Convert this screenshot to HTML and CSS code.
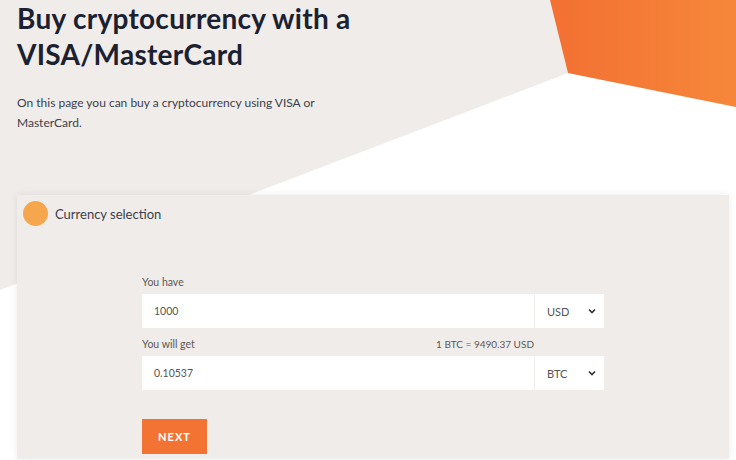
FILE: index.html
```html
<!DOCTYPE html>
<html lang="en">
<head>
<meta charset="utf-8">
<title>Buy cryptocurrency</title>
<link rel="stylesheet" href="styles.css">
</head>
<body>
<div class="backdrop" aria-hidden="true">
  <svg width="736" height="460" viewBox="0 0 736 460">
    <defs>
      <linearGradient id="og" x1="0" y1="0" x2="1" y2="0">
        <stop offset="0" stop-color="#f37032"/>
        <stop offset="1" stop-color="#f6873a"/>
      </linearGradient>
    </defs>
    <rect x="0" y="0" width="736" height="460" fill="#f0ece9"/>
    <polygon points="0,290 568,73 736,107 736,460 0,460" fill="#ffffff"/>
    <polygon points="550,0 736,0 736,107 568,73" fill="url(#og)"/>
  </svg>
</div>
<main class="page">
  <section class="hero">
    <h1 class="title">Buy cryptocurrency with a<br>VISA/MasterCard</h1>
    <p class="lead">On this page you can buy a cryptocurrency using VISA or<br>MasterCard.</p>
  </section>
  <section class="card">
    <div class="card-head">
      <span class="step-dot"></span>
      <span class="card-title">Currency selection</span>
    </div>
    <form class="form">
      <div class="field">
        <div class="label-row"><span>You have</span></div>
        <div class="control">
          <div class="input">1000</div>
          <div class="select"><span>USD</span>
            <svg class="chev" width="8" height="6" viewBox="0 0 8 6"><path d="M1 1.5 L4 4.5 L7 1.5" fill="none" stroke="#333" stroke-width="1.6"/></svg>
          </div>
        </div>
      </div>
      <div class="field">
        <div class="label-row"><span>You will get</span><span class="rate">1 BTC = 9490.37 USD</span></div>
        <div class="control">
          <div class="input">0.10537</div>
          <div class="select"><span>BTC</span>
            <svg class="chev" width="8" height="6" viewBox="0 0 8 6"><path d="M1 1.5 L4 4.5 L7 1.5" fill="none" stroke="#333" stroke-width="1.6"/></svg>
          </div>
        </div>
      </div>
      <div class="actions">
        <button type="button" class="btn">NEXT</button>
      </div>
    </form>
  </section>
</main>
</body>
</html>
```

FILE: styles.css
```css
html, body {
  margin: 0;
  padding: 0;
}
body {
  width: 736px;
  height: 460px;
  overflow: hidden;
  position: relative;
  font-family: "Lato", "Open Sans", sans-serif;
  background: #ffffff;
}
.backdrop {
  position: absolute;
  top: 0;
  left: 0;
  z-index: 0;
}
.backdrop svg {
  display: block;
}
.page {
  position: relative;
  z-index: 1;
  display: flex;
  flex-direction: column;
}
.hero {
  padding: 0 17px;
}
.title {
  margin: 0;
  font-size: 28px;
  line-height: 36px;
  font-weight: 700;
  color: #1b2130;
  letter-spacing: 0.27px;
}
.lead {
  margin: 21px 0 0;
  font-size: 12px;
  line-height: 20px;
  color: #3b3f4a;
}
.card {
  margin: 62px 0 0 17px;
  width: 712px;
  height: 264px;
  background: #f0ece9;
  box-shadow: 0 0 8px rgba(0, 0, 0, 0.08);
}
.card-head {
  display: flex;
  align-items: center;
  gap: 7px;
  padding: 6px 6px 0;
}
.step-dot {
  width: 25px;
  height: 25px;
  border-radius: 50%;
  background: #f6a64c;
  flex: none;
}
.card-title {
  font-size: 13px;
  color: #3b3f4c;
}
.form {
  margin: 50px 0 0 125px;
  width: 462px;
  display: flex;
  flex-direction: column;
}
.field {
  display: flex;
  flex-direction: column;
  margin-bottom: 10px;
}
.label-row {
  display: flex;
  justify-content: space-between;
  padding-right: 70px;
  font-size: 10.5px;
  line-height: 13px;
  color: #5b5856;
  margin-bottom: 5px;
}
.rate {
  color: #5b5856;
  font-size: 10px;
}
.control {
  display: flex;
  gap: 1px;
  height: 34px;
}
.input {
  flex: 1;
  background: #ffffff;
  display: flex;
  align-items: center;
  padding-left: 12px;
  font-size: 10.5px;
  color: #555;
}
.select {
  width: 69px;
  background: #ffffff;
  display: flex;
  align-items: center;
  justify-content: space-between;
  padding: 0 8px 0 12px;
  box-sizing: border-box;
  font-size: 11px;
  color: #555;
}
.chev {
  display: block;
}
.actions {
  margin-top: 19px;
}
.btn {
  width: 65px;
  height: 35px;
  border: none;
  background: #f37432;
  color: #ffffff;
  font-family: "Lato", sans-serif;
  font-weight: 700;
  font-size: 11px;
  letter-spacing: 1px;
  padding: 0;
}
```
